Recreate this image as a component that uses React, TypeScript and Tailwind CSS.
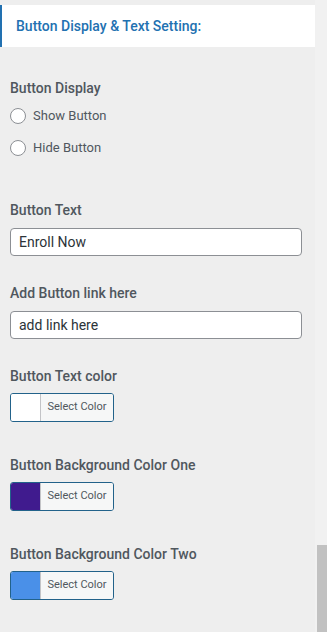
import React from "react";

type PickerProps = { label: string; swatch: string };

function ColorPicker({ label, swatch }: PickerProps) {
  return (
    <div className="mt-[33px] first:mt-0">
      <div className="text-[14px] leading-[20px] font-medium text-[#50575e]">{label}</div>
      <div className="mt-[7px] flex h-[29px] w-[104px] overflow-hidden rounded-[3px] border border-[#22628a]">
        <div className="w-[30px] border-r border-[#c3c4c7]" style={{ backgroundColor: swatch }} />
        <div className="flex flex-1 items-center justify-center bg-[#f6f7f7] text-[11px] text-[#50575e]">
          Select Color
        </div>
      </div>
    </div>
  );
}

function Radio({ label }: { label: string }) {
  return (
    <label className="flex h-[32px] items-center gap-[7px]">
      <span className="h-[16px] w-[16px] rounded-full border border-[#8c8f94] bg-white" />
      <span className="text-[13px] text-[#50575e]">{label}</span>
    </label>
  );
}

function TextField({ label, value, className }: { label: string; value: string; className?: string }) {
  return (
    <div className={className}>
      <div className="text-[14px] leading-[20px] font-medium text-[#50575e]">{label}</div>
      <div className="mt-[8px] flex h-[28px] w-[292px] items-center rounded-[4px] border border-[#8c8f94] bg-white px-[8px] text-[14px] text-[#2c3338]">
        {value}
      </div>
    </div>
  );
}

export default function App() {
  return (
    <div className="flex h-[632px] w-[327px] overflow-hidden bg-[#f1f1f1]" style={{ fontFamily: "Roboto, 'Liberation Sans', sans-serif" }}>
      <div className="w-[315px] bg-[#eeeeee] pt-[5px]">
        <div className="flex h-[42px] items-center border-l-2 border-[#2271b1] bg-white pl-[14px]">
          <span className="text-[14px] font-medium text-[#2271b1]">Button Display &amp; Text Setting:</span>
        </div>

        <div className="px-[10px]">
          <div className="mt-[31px] text-[14px] leading-[20px] font-medium text-[#50575e]">Button Display</div>
          <div className="mt-[2px]">
            <Radio label="Show Button" />
            <Radio label="Hide Button" />
          </div>

          <TextField className="mt-[36px]" label="Button Text" value="Enroll Now" />
          <TextField className="mt-[27px]" label="Add Button link here" value="add link here" />

          <div className="mt-[27px]">
            <ColorPicker label="Button Text color" swatch="#ffffff" />
            <ColorPicker label="Button Background Color One" swatch="#401b8e" />
            <ColorPicker label="Button Background Color Two" swatch="#4a90e8" />
          </div>
        </div>
      </div>
      <div className="flex w-[12px] flex-col">
        <div className="h-[545px]" />
        <div className="ml-[2px] flex-1 bg-[#c1c1c1]" />
      </div>
    </div>
  );
}
